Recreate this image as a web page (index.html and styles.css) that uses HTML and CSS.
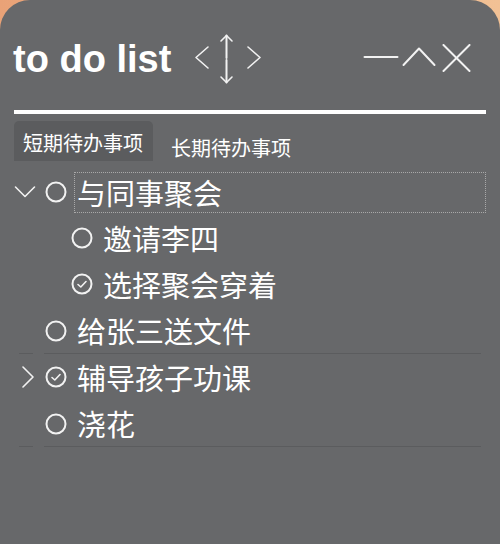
FILE: index.html
```html
<!DOCTYPE html>
<html lang="zh">
<head>
<meta charset="utf-8">
<title>to do list</title>
<link rel="stylesheet" href="styles.css">
</head>
<body>
<div class="app">
  <header class="header">
    <h1 class="title">to do list</h1>
    <svg class="nav" width="68" height="50" viewBox="0 0 68 50" fill="none" stroke="#f2f2f2" stroke-width="1.6" stroke-linecap="round" stroke-linejoin="round">
      <polyline points="14,13 2,23.5 14,34"/>
      <line x1="32.5" y1="1.5" x2="32.5" y2="24" stroke-width="2"/>
      <polyline points="27,7 32.5,1.5 38,7"/>
      <line x1="32.5" y1="26" x2="32.5" y2="48.5" stroke-width="2"/>
      <polyline points="27,43 32.5,48.5 38,43"/>
      <polyline points="54,13 66,23.5 54,34"/>
    </svg>
    <svg class="win" width="108" height="30" viewBox="0 0 108 30" fill="none" stroke="#f2f2f2" stroke-width="2" stroke-linecap="round" stroke-linejoin="round">
      <line x1="1.5" y1="13" x2="34.5" y2="13"/>
      <polyline points="40.5,21 56,4.5 71.5,21"/>
      <line x1="80.5" y1="1" x2="106.5" y2="27"/>
      <line x1="106.5" y1="1" x2="80.5" y2="27"/>
    </svg>
  </header>
  <div class="rule"></div>
  <nav class="tabs">
    <div class="tab tab-active">短期待办事项</div>
    <div class="tab">长期待办事项</div>
  </nav>
  <ul class="tree">
    <li class="row">
      <svg class="exp" width="22" height="22" viewBox="0 0 22 22" fill="none" stroke="#f2f2f2" stroke-width="1.6" stroke-linecap="round" stroke-linejoin="round"><polyline points="1.5,6 11,15.5 20.5,6"/></svg>
      <svg class="chk" width="22" height="22" viewBox="0 0 22 22" fill="none" stroke="#f2f2f2" stroke-width="2"><circle cx="11" cy="11" r="9.5"/></svg>
      <span class="label focus">与同事聚会</span>
    </li>
    <li class="row child">
      <span class="exp"></span>
      <svg class="chk" width="22" height="22" viewBox="0 0 22 22" fill="none" stroke="#f2f2f2" stroke-width="2"><circle cx="11" cy="11" r="9.5"/></svg>
      <span class="label">邀请李四</span>
    </li>
    <li class="row child">
      <span class="exp"></span>
      <svg class="chk" width="22" height="22" viewBox="0 0 22 22" fill="none" stroke="#f2f2f2" stroke-width="2" stroke-linecap="round" stroke-linejoin="round"><circle cx="11" cy="11" r="9.5"/><polyline points="7,11.5 9.8,14 15,8.5" stroke-width="1.6"/></svg>
      <span class="label">选择聚会穿着</span>
    </li>
    <li class="row sep">
      <span class="exp"></span>
      <svg class="chk" width="22" height="22" viewBox="0 0 22 22" fill="none" stroke="#f2f2f2" stroke-width="2"><circle cx="11" cy="11" r="9.5"/></svg>
      <span class="label">给张三送文件</span>
    </li>
    <li class="row">
      <svg class="exp" width="22" height="22" viewBox="0 0 22 22" fill="none" stroke="#f2f2f2" stroke-width="1.6" stroke-linecap="round" stroke-linejoin="round"><polyline points="9,1 19,11 9,21"/></svg>
      <svg class="chk" width="22" height="22" viewBox="0 0 22 22" fill="none" stroke="#f2f2f2" stroke-width="2" stroke-linecap="round" stroke-linejoin="round"><circle cx="11" cy="11" r="9.5"/><polyline points="7,11.5 9.8,14 15,8.5" stroke-width="1.6"/></svg>
      <span class="label">辅导孩子功课</span>
    </li>
    <li class="row sep">
      <span class="exp"></span>
      <svg class="chk" width="22" height="22" viewBox="0 0 22 22" fill="none" stroke="#f2f2f2" stroke-width="2"><circle cx="11" cy="11" r="9.5"/></svg>
      <span class="label">浇花</span>
    </li>
  </ul>
</div>
</body>
</html>
```
FILE: styles.css
```css
html, body {
  margin: 0;
  padding: 0;
}
body {
  width: 500px;
  height: 544px;
  overflow: hidden;
  background: linear-gradient(90deg, #e9a277 0%, #efb489 50%, #f2c195 100%);
}
.app {
  width: 500px;
  height: 544px;
  background: #67686a;
  border-radius: 30px 30px 0 0;
  color: #ffffff;
  font-family: "Noto Sans CJK SC", "Noto Sans", sans-serif;
}
.header {
  display: flex;
  align-items: center;
  padding: 34px 29px 0 13px;
}
.title {
  margin: 0;
  font-family: "Liberation Sans", Arial, sans-serif;
  font-weight: bold;
  font-size: 38px;
  line-height: 38px;
  color: #ffffff;
}
.nav {
  display: block;
  margin-left: 23px;
}
.win {
  display: block;
  margin-left: auto;
}
.rule {
  margin: 26px 14px 0 14px;
  height: 4px;
  background: #ffffff;
}
.tabs {
  display: flex;
  gap: 9px;
  margin: 7px 0 0 14px;
  height: 40px;
}
.tab {
  font-size: 20px;
  line-height: 26px;
  padding: 14px 9px 0 9px;
  white-space: nowrap;
}
.tab-active {
  padding-top: 9px;
  padding-right: 10px;
  background: #5b5c5e;
  border-radius: 5px 5px 0 0;
}
.tree {
  list-style: none;
  margin: 8px 0 0 0;
  padding: 0;
}
.row {
  display: flex;
  align-items: center;
  height: 46px;
  padding-left: 14px;
  font-size: 29px;
}
.row.child {
  padding-left: 40px;
}
.row.sep {
  height: 47px;
  background-image: linear-gradient(90deg, transparent 19px, #5b5c5e 19px, #5b5c5e 33px, transparent 33px, transparent 44px, #5b5c5e 44px, #5b5c5e 481px, transparent 481px);
  background-size: 100% 1px;
  background-position: 0 100%;
  background-repeat: no-repeat;
}
.exp {
  display: block;
  width: 22px;
  height: 22px;
  flex: none;
}
.chk {
  display: block;
  flex: none;
  margin-left: 9px;
}
.label {
  margin-left: 7px;
  padding-left: 2px;
  height: 39px;
  line-height: 39px;
  border: 1px dotted transparent;
  white-space: nowrap;
}
.label.focus {
  flex: 1;
  margin-right: 14px;
  border-color: #a9a9a9;
}
```
